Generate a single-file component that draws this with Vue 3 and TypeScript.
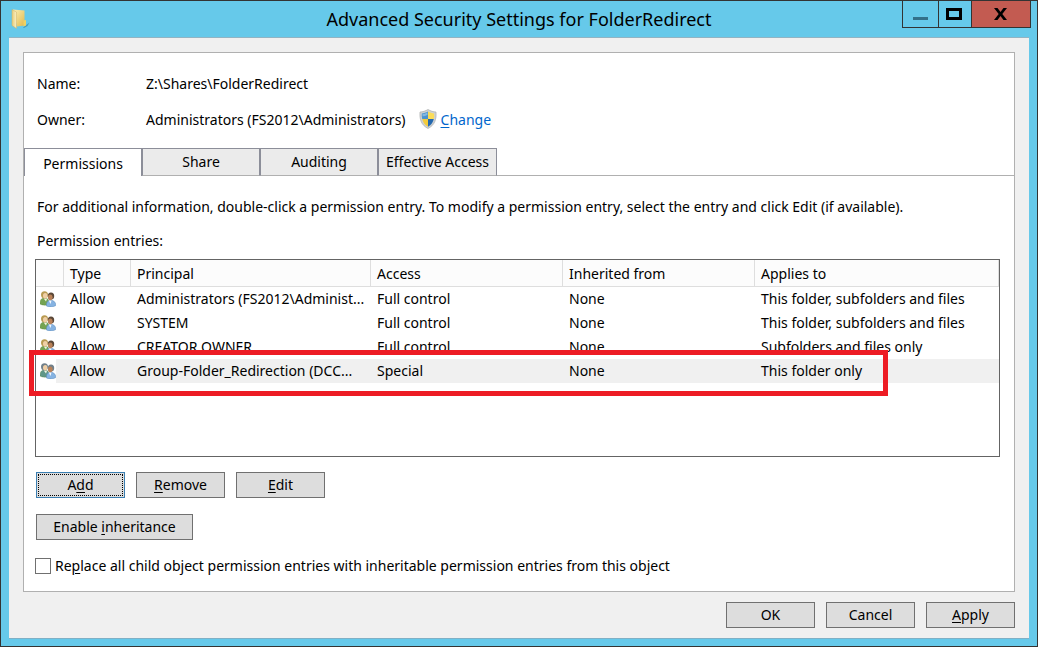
<script setup lang="ts">
import { ref } from 'vue'

interface Entry {
  type: string
  principal: string
  access: string
  inherited: string
  applies: string
}

const tabs: string[] = ['Permissions', 'Share', 'Auditing', 'Effective Access']
const activeTab = ref<string>('Permissions')
const selected = ref<number>(3)
const replaceAll = ref<boolean>(false)

const entries: Entry[] = [
  { type: 'Allow', principal: 'Administrators (FS2012\\Administ...', access: 'Full control', inherited: 'None', applies: 'This folder, subfolders and files' },
  { type: 'Allow', principal: 'SYSTEM', access: 'Full control', inherited: 'None', applies: 'This folder, subfolders and files' },
  { type: 'Allow', principal: 'CREATOR OWNER', access: 'Full control', inherited: 'None', applies: 'Subfolders and files only' },
  { type: 'Allow', principal: 'Group-Folder_Redirection (DCC...', access: 'Special', inherited: 'None', applies: 'This folder only' },
]
</script>

<template>
  <main class="window">
    <header class="titlebar">
      <svg class="folder" width="20" height="22" viewBox="0 0 20 22" aria-hidden="true">
        <defs>
          <linearGradient id="folderBack" x1="0" y1="0" x2="1" y2="1">
            <stop offset="0" stop-color="#fbf0b8" />
            <stop offset="1" stop-color="#e3b94a" />
          </linearGradient>
          <linearGradient id="folderFlap" x1="0" y1="0" x2="1" y2="0">
            <stop offset="0" stop-color="#e5cb7a" />
            <stop offset="1" stop-color="#fbf1c4" />
          </linearGradient>
        </defs>
        <path d="M12 19.500 L18.500 14.500 L16.500 18 L13 20Z" fill="#2f7f9f" opacity=".6" />
        <path d="M2 1.500 L13.500 2.500 V17.500 L6 18.500Z" fill="url(#folderBack)" />
        <path d="M12.500 12.500 L15 12 V17.500 L12.500 18.500Z" fill="#f0d262" />
        <path d="M1 1.500 L5.500 4 V20.500 L1 17.500Z" fill="url(#folderFlap)" stroke="#cdb066" stroke-width=".5" />
      </svg>
      <h1>Advanced Security Settings for FolderRedirect</h1>
      <div class="controls">
        <button type="button" class="min" aria-label="Minimize">
          <svg width="15" height="3" viewBox="0 0 15 3"><path d="M0 0H15V3H0Z" fill="#33708a" /></svg>
        </button>
        <button type="button" class="max" aria-label="Maximize">
          <svg width="16" height="12" viewBox="0 0 16 12"><path d="M1.500 1.500H14.500V10.500H1.500Z" fill="none" stroke="#000" stroke-width="3" /></svg>
        </button>
        <button type="button" class="close" aria-label="Close">
          <svg width="13" height="12" viewBox="0 0 13 12"><path d="M0 0H3.500L6.500 4L9.500 0H13L8.300 6L13 12H9.500L6.500 8L3.500 12H0L4.700 6Z" fill="#000" /></svg>
        </button>
      </div>
    </header>

    <div class="client">
      <section class="panel">
        <dl class="facts">
          <div>
            <dt>Name:</dt>
            <dd>Z:\Shares\FolderRedirect</dd>
          </div>
          <div>
            <dt>Owner:</dt>
            <dd>
              Administrators (FS2012\Administrators)
              <svg class="shield" width="18" height="20" viewBox="0 0 18 20" aria-hidden="true">
                <path d="M9 .5C6.500 2 3.500 3 1 3C.5 10 2 16 9 19.500C16 16 17.500 10 17 3C14.500 3 11.500 2 9 .5Z" fill="#cfd2d4" stroke="#aaaead" stroke-width=".7" />
                <path d="M9 2.500C7 3.600 5 4.300 2.800 4.500C2.600 6.500 2.700 8.300 3.200 10H9Z" fill="#4a93cf" />
                <path d="M9 2.500C11 3.600 13 4.300 15.200 4.500C15.400 6.500 15.300 8.300 14.800 10H9Z" fill="#fbdc58" />
                <path d="M3.200 10C4 13.300 5.700 15.800 9 17.800V10Z" fill="#f3cb3c" />
                <path d="M14.800 10C14 13.300 12.300 15.800 9 17.800V10Z" fill="#2468ae" />
                <path d="M3.500 5C5.500 4.900 7 4.200 8.500 3.400V6C6.500 7 5 7.300 3.500 7.300Z" fill="#9cc8ea" opacity=".7" />
              </svg>
              <a href="#"><u>C</u>hange</a>
            </dd>
          </div>
        </dl>

        <div class="tabs" role="tablist">
          <button
            v-for="tab in tabs"
            :key="tab"
            type="button"
            role="tab"
            :aria-selected="activeTab === tab"
            :class="{ active: activeTab === tab }"
            @click="activeTab = tab"
          >{{ tab }}</button>
        </div>

        <div class="body">
          <p class="hint">For additional information, double-click a permission entry. To modify a permission entry, select the entry and click Edit (if available).</p>
          <p id="entries-label">Permission entries:</p>

          <div class="list">
            <table aria-labelledby="entries-label">
              <colgroup>
                <col class="c-icon" />
                <col class="c-type" />
                <col class="c-principal" />
                <col class="c-access" />
                <col class="c-inherited" />
                <col />
              </colgroup>
              <thead>
                <tr>
                  <th></th>
                  <th>Type</th>
                  <th>Principal</th>
                  <th>Access</th>
                  <th>Inherited from</th>
                  <th>Applies to</th>
                </tr>
              </thead>
              <tbody>
                <tr v-for="(e, i) in entries" :key="i" :class="{ selected: selected === i }" @click="selected = i">
                  <td class="icon">
                    <svg width="16" height="16" viewBox="0 0 16 16" aria-hidden="true">
                      <path class="green" d="M0 13C0 9.500 1 7 4.500 7C8 7 9 9 9 13.500C6 14.500 2.500 14.500 0 13Z" fill="#74a352" stroke="#5c8740" stroke-width=".4" />
                      <path d="M3.500 7.300L6 10.500L7 7.800Z" fill="#f0f5e6" />
                      <ellipse class="hair" cx="4.500" cy="3.800" rx="3.500" ry="3.600" fill="#b99b52" />
                      <ellipse cx="5.200" cy="4.800" rx="2.200" ry="2.700" fill="#efcfa6" />
                      <path d="M6.500 15C6 11.500 7.500 9.500 10.500 9.300C14 9.300 15.800 11.300 15.800 14.500C13.500 16.200 9 16.300 6.500 15Z" fill="#86b3e2" stroke="#5786b8" stroke-width=".5" />
                      <path d="M8.800 9.600L10.500 13L11.500 9.500Z" fill="#f5f9fd" />
                      <ellipse class="hair" cx="11" cy="5" rx="3.200" ry="3.600" fill="#5b4838" />
                      <ellipse cx="10.300" cy="6.300" rx="2.300" ry="2.900" fill="#b98158" />
                    </svg>
                  </td>
                  <td>{{ e.type }}</td>
                  <td>{{ e.principal }}</td>
                  <td>{{ e.access }}</td>
                  <td>{{ e.inherited }}</td>
                  <td>{{ e.applies }}</td>
                </tr>
              </tbody>
            </table>
            <div class="marker"></div>
          </div>

          <div class="row">
            <button type="button" class="btn focused"><span>A<u>d</u>d</span></button>
            <button type="button" class="btn"><span><u>R</u>emove</span></button>
            <button type="button" class="btn"><span><u>E</u>dit</span></button>
          </div>
          <div class="row">
            <button type="button" class="btn wide"><span>Enable <u>i</u>nheritance</span></button>
          </div>
          <div class="check">
            <input id="replace" v-model="replaceAll" type="checkbox" />
            <label for="replace">Re<u>p</u>lace all child object permission entries with inheritable permission entries from this object</label>
          </div>
        </div>
      </section>

      <footer class="row actions">
        <button type="button" class="btn"><span>OK</span></button>
        <button type="button" class="btn"><span>Cancel</span></button>
        <button type="button" class="btn"><span><u>A</u>pply</span></button>
      </footer>
    </div>
  </main>
</template>

<style>
body {
  margin: 0;
  background: #fff;
}
</style>

<style scoped>
* {
  box-sizing: border-box;
}

.window {
  border: 1px solid #333;
  background: #66c9ea;
  padding: 0 8px 7px;
  color: #000;
  font: 14px/20px "Noto Sans", "Open Sans", sans-serif;
}

button {
  font: inherit;
  color: inherit;
  padding: 0;
  margin: 0;
}

u {
  text-underline-offset: 2px;
}

.titlebar {
  position: relative;
  display: flex;
  height: 36px;
  align-items: center;
  justify-content: center;
}

.folder {
  position: absolute;
  left: 2px;
  top: 7px;
}

h1 {
  margin: 0;
  font-size: 18px;
  line-height: 24px;
  font-weight: 400;
}

.controls {
  position: absolute;
  right: -2px;
  top: -1px;
  display: flex;
  height: 28px;
}

.controls button {
  display: flex;
  align-items: center;
  justify-content: center;
  border: 1px solid #333;
  background: #66c9ea;
}

.controls .min {
  width: 37px;
  align-items: flex-end;
  padding-bottom: 7px;
}

.controls .max {
  width: 34px;
  margin-left: -1px;
  padding-right: 2px;
}

.controls .close {
  width: 60px;
  margin-left: -1px;
  padding-right: 2px;
  background: #c35b51;
}

.client {
  background: #f0f0f0;
  border-top: 1px solid #92b4c3;
  border-bottom: 1px solid #7fb0c6;
  padding: 14px 14px 10px;
}

.panel {
  background: #fff;
  border: 1px solid #b0b0b0;
  padding-top: 20px;
}

.facts {
  margin: 0;
  padding-left: 13px;
}

.facts div {
  display: flex;
  height: 36px;
}

.facts dt {
  width: 109px;
  line-height: 22px;
}

.facts dd {
  display: flex;
  height: 22px;
  margin: 0;
  line-height: 22px;
}

.shield {
  margin: 0 4px 0 13px;
}

a {
  color: #0066cc;
  text-decoration: none;
}

.tabs {
  display: flex;
  height: 28px;
  margin-top: 3px;
  border-bottom: 1px solid #b0b0b0;
}

.tabs button {
  width: 118px;
  height: 28px;
  border: 1px solid #8c8e99;
  border-bottom-color: #b0b0b0;
  background: #ebebeb;
  white-space: nowrap;
}

.tabs button:last-child {
  width: 119px;
}

.tabs .active {
  padding-top: 2px;
  border-bottom: 0;
  background: #fff;
}

.body {
  padding: 20px 14px 15px 11px;
}

p {
  margin: 0 0 0 2px;
  line-height: 22px;
}

.hint {
  margin-bottom: 12px;
  white-space: nowrap;
}

.list {
  position: relative;
  min-height: 198px;
  margin-top: 7px;
  border: 1px solid #646464;
}

table {
  width: 100%;
  table-layout: fixed;
  border-collapse: separate;
  border-spacing: 0;
}

.c-icon {
  width: 28px;
}

.c-type {
  width: 67px;
}

.c-principal {
  width: 240px;
}

.c-access,
.c-inherited {
  width: 192px;
}

th {
  height: 27px;
  padding: 1px 0 0 6px;
  border-right: 1px solid #dedede;
  border-bottom: 1px solid #dedede;
  background: #fcfcfc;
  font-weight: 400;
  text-align: left;
}

td {
  height: 24px;
  padding: 0 0 0 6px;
  white-space: nowrap;
}

td.icon {
  padding-left: 4px;
}

.icon svg {
  display: block;
}

.selected td {
  background: #f0f0f0;
}

.selected td.icon {
  background: linear-gradient(90deg, #fff 20px, #f0f0f0 20px);
}

.selected .green {
  fill: #5f9688;
}

.selected .hair {
  fill: #71808a;
}

.marker {
  position: absolute;
  left: -7px;
  top: 90px;
  width: 859px;
  height: 46px;
  border: 5px solid #ed1c24;
  pointer-events: none;
}

.row {
  display: flex;
  gap: 11px;
  padding: 15px 0 0 1px;
}

.row + .row {
  padding-top: 16px;
}

.btn {
  width: 89px;
  height: 26px;
  border: 1px solid #707070;
  background: #ddd;
}

.btn.wide {
  width: 157px;
}

.focused {
  border-color: #3c7fb1;
  padding: 1px;
}

.focused span {
  display: block;
  height: 22px;
  border: 1px dotted #000;
}

.check {
  display: flex;
  align-items: center;
  gap: 4px;
  margin-top: 16px;
}

.check input {
  appearance: none;
  flex: none;
  width: 16px;
  height: 16px;
  margin: 0;
  border: 1px solid #707070;
  background: #fff;
}

.check input:checked {
  background: #707070;
}

.check label {
  white-space: nowrap;
}

.actions {
  justify-content: flex-end;
  padding-top: 10px;
}
</style>
